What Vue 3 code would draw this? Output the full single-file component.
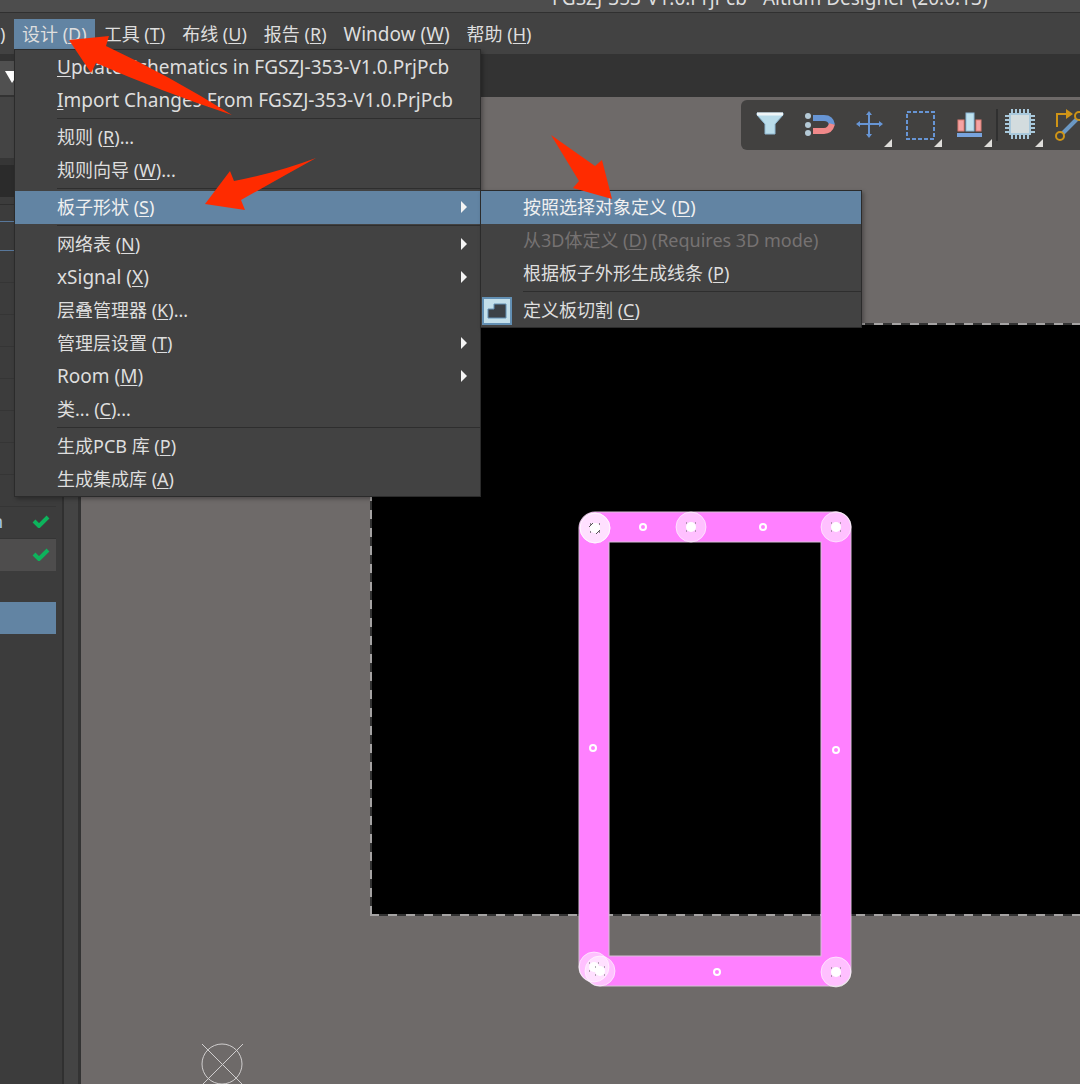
<script setup>
const menus = [
  { label: '工具', key: 'T' },
  { label: '布线', key: 'U' },
  { label: '报告', key: 'R' },
  { label: 'Window', key: 'W', latin: true },
  { label: '帮助', key: 'H' },
]

// before + key (underlined) + after make up each menu label
const designMenu = [
  { before: '', key: 'U', after: 'pdate Schematics in FGSZJ-353-V1.0.PrjPcb', latin: true },
  { before: '', key: 'I', after: 'mport Changes From FGSZJ-353-V1.0.PrjPcb', latin: true },
  { separator: true },
  { before: '规则 (', key: 'R', after: ')...' },
  { before: '规则向导 (', key: 'W', after: ')...' },
  { separator: true },
  {
    before: '板子形状 (', key: 'S', after: ')', arrow: true, active: true,
    children: [
      { before: '按照选择对象定义 (', key: 'D', after: ')', active: true },
      { before: '从3D体定义 (', key: 'D', after: ') (Requires 3D mode)', disabled: true },
      { before: '根据板子外形生成线条 (', key: 'P', after: ')' },
      { separator: true },
      { before: '定义板切割 (', key: 'C', after: ')', icon: true },
    ],
  },
  { separator: true },
  { before: '网络表 (', key: 'N', after: ')', arrow: true },
  { before: 'xSignal (', key: 'X', after: ')', arrow: true, latin: true },
  { before: '层叠管理器 (', key: 'K', after: ')...' },
  { before: '管理层设置 (', key: 'T', after: ')', arrow: true },
  { before: 'Room (', key: 'M', after: ')', arrow: true, latin: true },
  { before: '类... (', key: 'C', after: ')...' },
  { separator: true },
  { before: '生成PCB 库 (', key: 'P', after: ')' },
  { before: '生成集成库 (', key: 'A', after: ')' },
]

const chipPins = [17, 21, 25, 29, 33]
const handles = [[643, 527], [763, 527], [593, 748], [836, 750], [717, 972]]
const joints = [[595, 528], [595, 528], [691, 527], [836, 527], [836, 972], [594, 967], [600, 971]]
</script>

<template>
  <div class="app">
    <header class="titlebar"><span>FGSZJ-353-V1.0.PrjPcb - Altium Designer (20.0.13)</span></header>

    <nav class="menubar">
      <span class="cut">)</span>
      <div class="menu-root">
        <button class="menu-button open">设计 (<u>D</u>)</button>
        <ul class="menu">
          <li v-for="(item, i) in designMenu" :key="i" :class="item.separator ? 'separator' : 'entry'">
            <button v-if="!item.separator" class="item" :class="{ active: item.active, latin: item.latin }">
              <span>{{ item.before }}<u>{{ item.key }}</u>{{ item.after }}</span>
              <svg v-if="item.arrow" class="more" width="8" height="12"><path d="M1 0L7 6L1 12Z" fill="#f4f4f4" /></svg>
            </button>
            <ul v-if="item.children" class="menu submenu">
              <li v-for="(sub, j) in item.children" :key="j" :class="sub.separator ? 'separator' : 'entry'">
                <button v-if="!sub.separator" class="item" :class="{ active: sub.active }" :disabled="sub.disabled">
                  <svg v-if="sub.icon" class="item-icon" width="30" height="28">
                    <rect width="30" height="28" fill="#6390b4" />
                    <rect x="2" y="2" width="26" height="24" fill="#c3dfea" />
                    <path d="M6 12H12V7H24V21H6Z" fill="#3c4146" stroke="#6390b4" stroke-width="1" />
                  </svg>
                  <span>{{ sub.before }}<u>{{ sub.key }}</u>{{ sub.after }}</span>
                </button>
              </li>
            </ul>
          </li>
        </ul>
      </div>
      <button v-for="m in menus" :key="m.key" class="menu-button" :class="{ latin: m.latin }">{{ m.label }} (<u>{{ m.key }}</u>)</button>
    </nav>

    <div class="tabstrip">
      <button class="tab-picker" aria-label="Choose">
        <svg width="16" height="34"><path d="M5 10H20L12 22Z" fill="#fff" /></svg>
      </button>
    </div>

    <main class="workspace">
      <aside class="sidebar">
        <div class="panel">
          <div class="panel-head"></div>
          <div class="panel-title"></div>
          <div class="panel-gap"></div>
          <div class="panel-filter"></div>
          <div class="row focus"></div>
          <div v-for="n in 7" :key="n" class="row"></div>
          <div class="row">
            <svg class="mark" width="18" height="18"><circle cx="9" cy="9" r="7" fill="none" stroke="#b5a08a" stroke-width="2" /></svg>
          </div>
          <div class="row">
            <span class="row-name">n</span>
            <svg class="mark" width="18" height="14"><path d="M2 7L7 12L16 3" fill="none" stroke="#0db35c" stroke-width="4" /></svg>
          </div>
          <div class="row current">
            <svg class="mark" width="18" height="14"><path d="M2 7L7 12L16 3" fill="none" stroke="#0db35c" stroke-width="4" /></svg>
          </div>
          <div class="row-selected"></div>
        </div>
      </aside>

      <section class="canvas">
        <svg class="drawing" width="100%" height="100%">
          <g transform="translate(-81 -97)">
            <rect x="370" y="323" width="3000" height="593" fill="#000" />
            <path d="M3370 324H371V915H3370" fill="none" stroke="#333" stroke-width="2" />
            <path d="M370 915H3370M371 915V323M370 324H3370" fill="none" stroke="#a5a3a3" stroke-width="2" stroke-dasharray="9 9" />

            <g fill="none" stroke-linecap="round">
              <g stroke="#d8c0d8" stroke-width="31">
                <path d="M595 527H835" /><path d="M594 528V967" /><path d="M836 527V971" /><path d="M600 971H835" />
              </g>
              <g stroke="#ff80ff" stroke-width="29">
                <path d="M595 527H835" /><path d="M594 528V967" /><path d="M836 527V971" /><path d="M600 971H835" />
              </g>
            </g>
            <circle v-for="([x, y], i) in joints" :key="'j' + i" :cx="x" :cy="y" r="15" fill="#fff" fill-opacity=".5" stroke="#fff" stroke-opacity=".6" />
            <g v-for="([x, y], i) in joints" :key="'d' + i">
              <path :d="`M${x - 5} ${y - 4}h1M${x + 4} ${y - 4}h1M${x - 5} ${y + 4}h1M${x + 4} ${y + 4}h1`" stroke="#666" />
              <circle :cx="x" :cy="y" r="5" fill="#fff" />
            </g>
            <path d="M589 527L593 523M596 534L600 530" stroke="#555" />
            <circle v-for="([x, y], i) in handles" :key="'h' + i" :cx="x" :cy="y" r="3" fill="#ff80ff" stroke="#fff" stroke-width="2" />

            <g fill="none" stroke="#d0cece" stroke-width="1">
              <circle cx="222" cy="1064" r="20" />
              <path d="M202 1044L243 1085M243 1044L202 1085" />
            </g>
          </g>
        </svg>

        <div class="toolbar">
          <button aria-label="Filter">
            <svg width="50" height="50">
              <path d="M12 13H38V15L30 24V34H20V24L12 15Z" fill="#b9dcea" stroke="#8fb9d3" />
              <path d="M12 14H38" stroke="#f0f6f8" stroke-width="3" />
            </svg>
          </button>
          <button aria-label="Snap">
            <svg width="50" height="50">
              <g fill="#b4c9d6"><circle cx="13" cy="16" r="3" /><circle cx="13" cy="25" r="3" /><circle cx="13" cy="33" r="3" /></g>
              <path d="M18 18H29Q36 18 37 25" fill="none" stroke="#6795d5" stroke-width="6" />
              <path d="M18 31H29Q35 31 37 24" fill="none" stroke="#f0898a" stroke-width="6" />
            </svg>
          </button>
          <button aria-label="Move">
            <svg width="50" height="50">
              <path d="M24 13V36M13 24H36" stroke="#6795d5" stroke-width="2" />
              <path d="M24 11L27 15H21ZM24 38L21 34H27ZM11 24L15 21V27ZM38 24L34 21V27Z" fill="#6795d5" />
              <path d="M47 39V47H39Z" fill="#deddda" />
            </svg>
          </button>
          <button aria-label="Select area">
            <svg width="50" height="50">
              <rect x="12" y="12" width="27" height="27" fill="none" stroke="#6795d5" stroke-width="2" stroke-dasharray="4 2" />
              <path d="M47 39V47H39Z" fill="#deddda" />
            </svg>
          </button>
          <button aria-label="Align">
            <svg width="50" height="50">
              <rect x="13" y="20" width="6" height="11" fill="#f5a3a3" stroke="#dd7f74" />
              <rect x="31" y="20" width="5" height="11" fill="#f5a3a3" stroke="#dd7f74" />
              <rect x="21" y="13" width="8" height="18" fill="#bfe2ee" stroke="#8cb8d8" />
              <rect x="12" y="33" width="25" height="4" fill="#78a3dd" />
              <path d="M47 39V47H39Z" fill="#deddda" />
            </svg>
          </button>
          <button aria-label="Component" class="divided">
            <svg width="50" height="50">
              <path v-for="p in chipPins" :key="p" :d="`M${p} 9V39M10 ${p - 1}H40`" stroke="#a9c9dc" stroke-width="2" />
              <rect x="15" y="14" width="20" height="20" fill="#d3dcde" stroke="#a9c9dc" stroke-width="2" />
              <path d="M48 39V47H40Z" fill="#deddda" />
            </svg>
          </button>
          <button aria-label="Route">
            <svg width="50" height="50">
              <path d="M17 34L33 18" stroke="#6b98c4" stroke-width="4" />
              <path d="M12 27V14H22" fill="none" stroke="#cf9416" stroke-width="2" />
              <path d="M21 9L28 14L21 19Z" fill="#cf9416" />
              <circle cx="15" cy="36" r="4" fill="#42413c" stroke="#cf9416" stroke-width="2" />
              <circle cx="34" cy="16" r="4" fill="#42413c" stroke="#cf9416" stroke-width="2" />
            </svg>
          </button>
        </div>
      </section>
    </main>

    <svg class="annotations" width="640" height="220" aria-hidden="true">
      <g fill="#ff2b00">
        <path d="M69 40L109 36L106 46Q170 76 232 115Q160 91 96 63L91 73Z" />
        <path d="M205 204L230 171L234 181Q276 173 316 158Q280 178 241 200L245 210Z" />
        <path d="M612 199L602 160L595 166L551 135L579 181L573 188Z" />
      </g>
    </svg>
  </div>
</template>

<style>
body {
  margin: 0;
  background: #6e6a69;
}
</style>

<style scoped>
.app {
  position: relative;
  display: flex;
  flex-direction: column;
  min-height: 100vh;
  overflow: hidden;
  background: #3c3c3c;
  color: #dedede;
  font: 18px/24px "Noto Sans", "Noto Sans CJK SC", sans-serif;
}
button {
  margin: 0;
  padding: 0;
  border: 0;
  background: none;
  color: inherit;
  font: inherit;
  text-align: left;
  white-space: nowrap;
}
svg {
  display: block;
}
u {
  text-underline-offset: 2px;
  text-decoration-thickness: 1px;
}
.titlebar {
  display: flex;
  align-items: flex-end;
  height: 12px;
  padding-left: 552px;
  overflow: hidden;
  border-bottom: 1px solid #303030;
  background: #4d4d4d;
  font-size: 19px;
  white-space: nowrap;
}
.titlebar span {
  margin-bottom: 2px;
}
.menubar {
  display: flex;
  gap: 1px;
  box-sizing: border-box;
  height: 41px;
  padding-top: 6px;
  background: #424242;
}
.cut {
  width: 13px;
  line-height: 30px;
}
.menu-root {
  position: relative;
  z-index: 2;
}
.menu-button {
  height: 30px;
  padding: 0 8px;
  line-height: 30px;
}
.menu-button.open {
  background: #6284a3;
}
.latin {
  font-size: 19px;
}
.menu {
  position: absolute;
  top: 30px;
  left: 0;
  box-sizing: border-box;
  width: 467px;
  margin: 0;
  padding: 1px 0 0;
  border: 1px solid #2b2b2b;
  background: #424242;
  list-style: none;
  box-shadow: 2px 2px 4px rgba(0, 0, 0, 0.3);
}
.entry {
  position: relative;
}
.item {
  display: flex;
  align-items: center;
  justify-content: space-between;
  box-sizing: border-box;
  width: 100%;
  height: 33px;
  padding: 0 12px 1px 42px;
}
.item.active {
  background: #6284a3;
  color: #f0f0f0;
}
.item:disabled {
  color: #767272;
}
.separator {
  box-sizing: border-box;
  height: 4px;
  margin-left: 42px;
  border-top: 1px solid #424242;
  box-shadow: inset 0 1px #2e2e2e;
}
.submenu {
  top: -1px;
  left: 100%;
  width: 382px;
  padding: 0;
}
.item-icon {
  position: absolute;
  left: 1px;
  top: 3px;
}
.tabstrip {
  box-sizing: border-box;
  height: 43px;
  padding-top: 7px;
  background: #333;
}
.tab-picker {
  width: 64px;
  height: 34px;
  background: #505050;
}
.workspace {
  display: flex;
  flex: 1;
}
.sidebar {
  flex: none;
  box-sizing: border-box;
  width: 81px;
  border-right: 3px solid #333;
  background: #444;
}
.panel {
  box-sizing: border-box;
  width: 64px;
  height: 100%;
  border-right: 2px solid #303030;
  background: #3c3c3c;
}
.panel-head {
  height: 61px;
  background: #444;
}
.panel-title {
  height: 32px;
  border-top: 7px solid #363636;
  background: #2b2b2b;
}
.panel-gap {
  height: 7px;
  border-bottom: 1px solid #2e2e2e;
}
.panel-filter {
  height: 16px;
}
.row {
  display: flex;
  align-items: center;
  box-sizing: border-box;
  width: 56px;
  height: 32px;
  padding-bottom: 3px;
  border-bottom: 1px solid #353535;
}
.row.focus {
  height: 30px;
  border-top: 1px solid #58779a;
  border-bottom: 1px solid #58779a;
}
.row.current {
  border: 0;
  background: #4e4d4d;
}
.row-name {
  margin-left: -8px;
  color: #a9c8e8;
}
.mark {
  margin-left: auto;
  margin-right: 6px;
}
.row-selected {
  width: 56px;
  height: 32px;
  margin-top: 31px;
  background: #6284a3;
}
.canvas {
  position: relative;
  flex: 1;
  min-width: 0;
  overflow: hidden;
  background: #6e6a69;
}
.drawing {
  position: absolute;
  inset: 0;
}
.toolbar {
  position: absolute;
  top: 3px;
  left: 660px;
  display: flex;
  height: 50px;
  padding-left: 4px;
  border-radius: 6px;
  background: #424140;
}
.toolbar button {
  flex: none;
  width: 50px;
}
.toolbar .divided {
  background: linear-gradient(#303030, #303030) 1px 9px / 2px 32px no-repeat;
}
.annotations {
  position: absolute;
  top: 0;
  left: 0;
  z-index: 3;
  pointer-events: none;
}
</style>
